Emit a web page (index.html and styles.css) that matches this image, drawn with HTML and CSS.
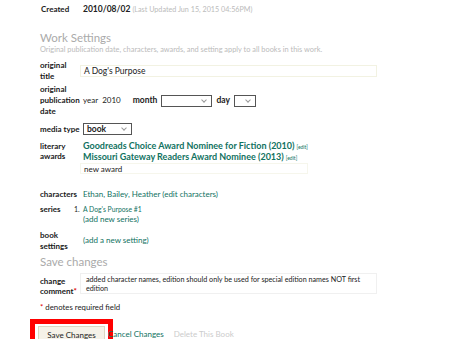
FILE: index.html
```
<!doctype html>
<html>
	<head>
		<meta charset="utf-8"/>
		<title>Edit Work</title>
		<link rel="stylesheet" href="styles.css">
	</head>
	<body>
		<div class="page">
			<div class="row created">
				<div class="label">Created</div>
				<div class="value"><b>2010/08/02</b> <span class="muted">(Last Updated Jun 15, 2015 04:56PM)</span></div>
			</div>

			<h2 class="section">Work Settings</h2>
			<p class="intro">Original publication date, characters, awards, and setting apply to all books in this work.</p>

			<div class="row r-title">
				<div class="label">original<br>title</div>
				<div class="value"><div class="textbox wide">A Dog's Purpose</div></div>
			</div>

			<div class="row r-date">
				<div class="label">original<br>publication<br>date</div>
				<div class="value inline">
					<span>year</span><span class="year">2010</span>
					<span class="strong">month</span><span class="select month"><i></i></span>
					<span class="strong">day</span><span class="select day"><i></i></span>
				</div>
			</div>

			<div class="row r-media">
				<div class="label">media type</div>
				<div class="value"><span class="select media">book<i></i></span></div>
			</div>

			<div class="row r-awards">
				<div class="label">literary<br>awards</div>
				<div class="value">
					<div><a class="award-link">Goodreads Choice Award Nominee for Fiction (2010)</a> <a class="tiny">[edit]</a></div>
					<div><a class="award-link">Missouri Gateway Readers Award Nominee (2013)</a> <a class="tiny">[edit]</a></div>
					<div class="textbox award">new award</div>
				</div>
			</div>

			<div class="row r-chars">
				<div class="label">characters</div>
				<div class="value"><a>Ethan, Bailey, Heather (edit characters)</a></div>
			</div>

			<div class="row r-series">
				<div class="label">series</div>
				<div class="value">
					<div class="series"><span class="num">1.</span><a class="first">A Dog's Purpose #1</a></div>
					<div class="series"><span class="num"></span><a>(add new series)</a></div>
				</div>
			</div>

			<div class="row r-book">
				<div class="label">book<br>settings</div>
				<div class="value"><a>(add a new setting)</a></div>
			</div>

			<h2 class="section save">Save changes</h2>

			<div class="row r-comment">
				<div class="label">change<br>comment<span class="req">*</span></div>
				<div class="value"><div class="textbox area">added character names, edition should only be used for special edition names NOT first edition</div></div>
			</div>

			<p class="note"><span class="req">*</span> denotes required field</p>

			<div class="actions">
				<span class="highlight"><span class="button">Save Changes</span></span>
				<a class="cancel">Cancel Changes</a>
				<span class="delete">Delete This Book</span>
			</div>
		</div>
	</body>
</html>
```

FILE: styles.css
```
*{margin:0;padding:0;box-sizing:border-box;}
body{
	background:#fff;
	font-family:Lato,"Open Sans",sans-serif;
	color:#222;
	overflow:hidden;
}
.page{
	padding:4px 0 0 40px;
	width:460px;
}
a{color:#11725f;}
.row{
	display:grid;
	grid-template-columns:43px 1fr;
	font-size:8px;
	line-height:11px;
}
.label{
	font-weight:bold;
	font-size:8px;
	color:#1a1a1a;
	white-space:nowrap;
}
.created .label{padding-left:1px;}
.created .value b{font-size:8.5px;}
.muted{color:#bbb;font-size:7.2px;}

.section{
	font-weight:normal;
	font-size:11.5px;
	color:#aaa;
	line-height:14px;
	margin-top:16px;
}
.intro{
	font-size:7.4px;
	color:#bbb;
	line-height:10px;
}
.textbox{
	border:1px solid #f2f2e2;
	height:12px;
	line-height:10px;
	padding-left:3px;
	margin-left:-3px;
	color:#222;
}
.wide{width:297px;font-size:8.5px;}
.r-title{margin-top:5px;align-items:center;}
.r-date{margin-top:2px;align-items:center;}
.inline{
	display:flex;
	align-items:center;
}
.year{margin-left:4px;margin-right:12px;}
.strong{font-weight:bold;font-size:8.5px;margin-right:4px;}
.month + .strong{margin-left:4px;}
.select{
	display:inline-block;
	position:relative;
	border:1px solid #555;
	height:12px;
	line-height:10px;
	padding-left:3px;
	background:#fff;
}
.select i{
	position:absolute;
	right:5px;
	top:2px;
	width:4px;
	height:4px;
	border-right:1px solid #999;
	border-bottom:1px solid #999;
	transform:rotate(45deg);
}
.month{width:51px;}
.day{width:22px;}
.media{width:49px;font-weight:bold;font-size:8.5px;}
.r-media{margin-top:6px;line-height:12px;}
.r-awards{margin-top:6px;line-height:10px;}
.award-link{font-weight:bold;font-size:9px;}
.tiny{font-size:5px;}
.award{width:228px;border-color:#f6f6ec;height:11px;line-height:10px;margin-top:0;}
.r-chars{margin-top:15px;}
.r-series{margin-top:4px;line-height:10px;}
.series{display:flex;margin-left:-9px;}
.num{width:9px;font-size:7px;}
.series a.first{font-size:6.8px;}
.r-book{margin-top:6px;}
.r-book .value{padding-top:5px;}
.section.save{margin-top:3px;}
.r-comment{margin-top:7px;line-height:10px;}
.area{
	width:297px;
	height:21px;
	font-size:7.2px;
	line-height:9px;
	padding-top:1px;
	padding-left:5px;
	margin-top:-3px;
	border-color:#f0f0f0;
}
.req{color:#d00;}
.note{
	font-size:7.8px;
	line-height:12px;
	margin-top:5px;
}
.actions{
	display:flex;
	align-items:flex-start;
	margin-top:6px;
	margin-left:-10px;
	font-size:8px;
	height:20px;
}
.highlight{
	border:5px solid #f00;
	border-bottom:0;
	padding:2px 3px 0 3px;
	width:83px;
	height:24px;
}
.button{
	display:block;
	background:#f5f2e8;
	border:1px solid #dcd6c2;
	text-align:center;
	height:20px;
	line-height:16px;
	font-size:8px;
	color:#222;
}
.cancel{margin-left:-5px;padding-top:10px;line-height:11px;}
.delete{color:#ccc;margin-left:10px;padding-top:10px;line-height:11px;}
```
